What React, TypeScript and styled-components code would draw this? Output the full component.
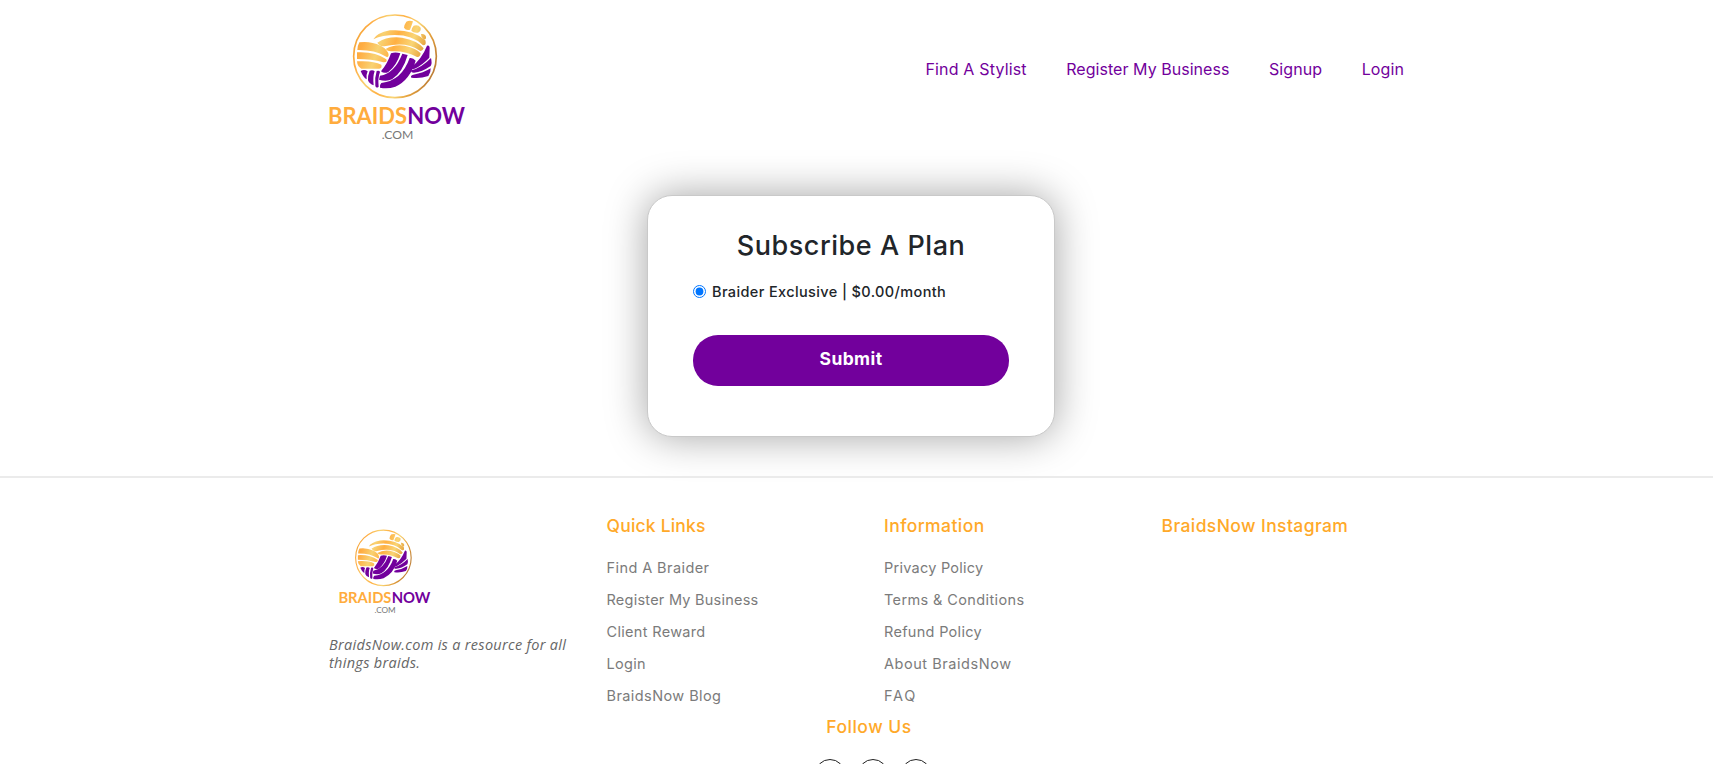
import React from "react";
import styled, { createGlobalStyle } from "styled-components";

const GlobalStyle = createGlobalStyle`
  * { box-sizing: border-box; }
  body { margin: 0; background: #fff; color: #212529; font-family: Inter, "Liberation Sans", sans-serif; overflow: hidden; }
`;

const Page = styled.div`
  height: 764px;
  overflow: hidden;
`;

const Container = styled.div`
  width: 1110px;
  margin-left: 329px;
`;

const Header = styled(Container)`
  height: 150px;
  display: flex;
  justify-content: space-between;
`;

const LogoSvg = styled.svg<{ $scale: number }>`
  display: block;
  flex: none;
  width: ${(p) => 160 * p.$scale}px;
  height: ${(p) => 150 * p.$scale}px;
`;

const HeaderLogo = styled.div`
  margin-left: -9px;
`;

const Nav = styled.nav`
  display: flex;
  gap: 39.5px;
  padding: 59px 35px 0 0;
`;

const Tracked = styled.span<{ $track?: number }>`
  white-space: nowrap;
  letter-spacing: ${(p) => p.$track ?? 0}px;
`;

const NavLink = styled(Tracked)`
  font-size: 16px;
  line-height: 20px;
  color: #72009c;
`;

const Card = styled.section`
  width: 408px;
  height: 242px;
  margin: 45px 0 0 647px;
  padding: 33px 45px 0;
  border: 1px solid #c9c9c9;
  border-radius: 25px;
  background: #fff;
  box-shadow: 0 0 40px rgba(0, 0, 0, 0.36);
`;

const Title = styled.h1`
  margin: 0;
  text-align: center;
  font-size: 27px;
  font-weight: 450;
  line-height: 34px;
`;

const Plan = styled.label`
  display: flex;
  align-items: center;
  gap: 6px;
  height: 20px;
  margin-top: 18px;
  font-size: 14.5px;
  font-weight: 450;
`;

const Radio = styled.input`
  width: 13px;
  height: 13px;
  margin: 0;
  accent-color: #0075ff;
`;

const Submit = styled.button`
  display: block;
  width: 316px;
  height: 51px;
  margin-top: 34px;
  padding: 0 0 4px;
  border: 0;
  border-radius: 25px;
  background: #72009c;
  color: #fff;
  font: 700 17.5px Inter, sans-serif;
`;

const Footer = styled.footer`
  margin-top: 39px;
  border-top: 2px solid #ebebeb;
`;

const Columns = styled(Container)`
  display: grid;
  grid-template-columns: repeat(4, 277.5px);
  height: 230px;
  padding-top: 36px;
`;

const About = styled.div`
  padding-top: 6px;
`;

const FooterLogo = styled.div`
  margin-left: 4px;
`;

const Tagline = styled.p`
  margin: 15px 0 0;
  font: italic 14.5px/18px "Open Sans", sans-serif;
  color: #666;
`;

const Heading = styled.h2`
  margin: 0;
  font-size: 17.5px;
  font-weight: 450;
  line-height: 24px;
  color: #ffa929;
`;

const Links = styled.ul`
  margin: 14px 0 0;
  padding: 0;
  list-style: none;
`;

const LinkItem = styled.li`
  height: 32px;
  font-size: 14.5px;
  line-height: 32px;
  color: #7b7b7b;
`;

const Follow = styled.div`
  display: flex;
  flex-direction: column;
  align-items: center;
  width: 128px;
  margin: 7px 0 0 809px;
`;

const FollowHeading = styled(Heading)`
  margin-right: 8px;
`;

const Socials = styled.div`
  display: flex;
  gap: 13px;
  margin-top: 20px;
`;

const Social = styled.span`
  width: 30px;
  height: 30px;
  border: 1px solid #222;
  border-radius: 50%;
`;

function Logo({ scale, id }: { scale: number; id: string }) {
  const gold = `url(#${id})`;
  return (
    <LogoSvg $scale={scale} viewBox="0 0 480 450" role="img" aria-label="BraidsNow.com">
      <defs>
        <linearGradient id={id} gradientUnits="userSpaceOnUse" x1="100" y1="100" x2="350" y2="190">
          <stop offset="0" stopColor="#efa63a" />
          <stop offset=".14" stopColor="#ffac42" />
          <stop offset=".32" stopColor="#f8d272" />
          <stop offset=".48" stopColor="#ffb043" />
          <stop offset=".66" stopColor="#f9d575" />
          <stop offset=".82" stopColor="#e5a13c" />
          <stop offset="1" stopColor="#bd7e35" />
        </linearGradient>
      </defs>
      <circle cx="225" cy="169" r="124" fill="none" stroke={gold} strokeWidth="5" />
      <g fill={gold}>
        <path d="M118 127Q150 122 182 137Q205 149 206 166Q204 175 196 169Q164 149 112 150Q112 138 118 127Z" />
        <path d="M111 157Q166 154 199 178Q203 188 190 187Q154 177 111 177Z" />
        <path d="M111 184Q160 181 184 194Q187 204 178 206L124 206Q112 200 111 184Z" />
        <path d="M160 118Q170 99 210 91Q277 86 316 121Q321 138 308 135Q268 96 190 108Q174 111 160 118Z" />
        <path d="M172 128Q202 108 246 113Q292 121 311 145Q306 157 297 151Q260 123 193 139Q179 140 172 128Z" />
        <path d="M197 147Q223 132 254 137Q290 145 302 160Q300 173 291 171Q257 152 215 154Q203 155 197 147Z" />
        <path d="M259 65Q268 60 279 64Q275 77 270 89Q258 93 252 83Q253 73 259 65ZM281 77Q295 73 302 83Q304 93 294 98Q280 100 274 92Q276 82 281 77ZM303 102Q315 100 318 110Q319 120 311 118Q302 110 303 102Z" />
      </g>
      <g fill="#72009c">
        <path d="M213 160Q226 155 241 160Q230 197 205 216Q192 222 183 214Q203 190 213 160Z" />
        <path d="M247 161L263 165Q248 217 216 238Q199 246 177 239L180 227Q224 220 247 161Z" />
        <path d="M269 174Q279 172 287 182Q270 240 226 260Q203 268 180 263Q178 255 184 249Q245 242 269 174Z" />
        <path d="M321 137Q328 134 329 143L328 173Q306 196 284 206Q269 210 274 201Q306 176 321 137Z" />
        <path d="M333 174Q337 190 332 198Q306 216 282 218Q271 218 274 211Q305 203 333 174Z" />
        <path d="M332 205Q333 217 325 228Q299 237 274 233Q270 227 280 224Q310 219 332 205Z" />
        <path d="M122 213Q133 207 143 214Q138 224 140 238Q130 233 122 213ZM149 212Q159 209 164 214Q158 228 161 256Q148 252 144 241Q143 227 149 212ZM170 213Q178 210 180 216Q173 234 176 260Q169 266 166 258Q163 235 170 213Z" />
      </g>
      <g fontFamily="Lato, sans-serif">
        <text x="24" y="372" fontSize="66" fontWeight="700" textLength="237" lengthAdjust="spacingAndGlyphs" fill="#ffac3d">BRAIDS</text>
        <text x="262" y="372" fontSize="66" fontWeight="700" textLength="173" lengthAdjust="spacingAndGlyphs" fill="#72009c">NOW</text>
        <text x="185" y="417" fontSize="37" textLength="95" lengthAdjust="spacingAndGlyphs" fill="#777">.COM</text>
      </g>
    </LogoSvg>
  );
}

type Item = [string, number];
const nav: Item[] = [["Find A Stylist", 0.17], ["Register My Business", 0.04], ["Signup", 0.1], ["Login", 0.1]];
const quick: Item[] = [["Find A Braider", 0.42], ["Register My Business", 0.24], ["Client Reward", 0.32], ["Login", 0.3], ["BraidsNow Blog", 0.42]];
const info: Item[] = [["Privacy Policy", 0.25], ["Terms & Conditions", 0.38], ["Refund Policy", 0.3], ["About BraidsNow", 0.55], ["FAQ", 1.8]];

function LinkColumn({ title, track, items }: { title: string; track: number; items: Item[] }) {
  return (
    <div>
      <Heading><Tracked $track={track}>{title}</Tracked></Heading>
      <Links>
        {items.map(([label, t]) => (
          <LinkItem key={label}><Tracked $track={t}>{label}</Tracked></LinkItem>
        ))}
      </Links>
    </div>
  );
}

export default function App() {
  return (
    <Page>
      <GlobalStyle />
      <Header as="header">
        <HeaderLogo><Logo scale={1} id="goldHeader" /></HeaderLogo>
        <Nav>{nav.map(([label, t]) => <NavLink key={label} $track={t}>{label}</NavLink>)}</Nav>
      </Header>
      <Card>
        <Title><Tracked $track={0.55}>Subscribe A Plan</Tracked></Title>
        <Plan><Radio type="radio" name="plan" defaultChecked /><Tracked $track={0.38}>Braider Exclusive | $0.00/month</Tracked></Plan>
        <Submit><Tracked $track={0.4}>Submit</Tracked></Submit>
      </Card>
      <Footer>
        <Columns>
          <About>
            <FooterLogo><Logo scale={0.672} id="goldFooter" /></FooterLogo>
            <Tagline><Tracked $track={0.3}>BraidsNow.com is a resource for all</Tracked><br /><Tracked $track={0.3}>things braids.</Tracked></Tagline>
          </About>
          <LinkColumn title="Quick Links" track={0.2} items={quick} />
          <LinkColumn title="Information" track={0.42} items={info} />
          <LinkColumn title="BraidsNow Instagram" track={0.4} items={[]} />
        </Columns>
        <Follow>
          <FollowHeading><Tracked $track={0.5}>Follow Us</Tracked></FollowHeading>
          <Socials><Social /><Social /><Social /></Socials>
        </Follow>
      </Footer>
    </Page>
  );
}
